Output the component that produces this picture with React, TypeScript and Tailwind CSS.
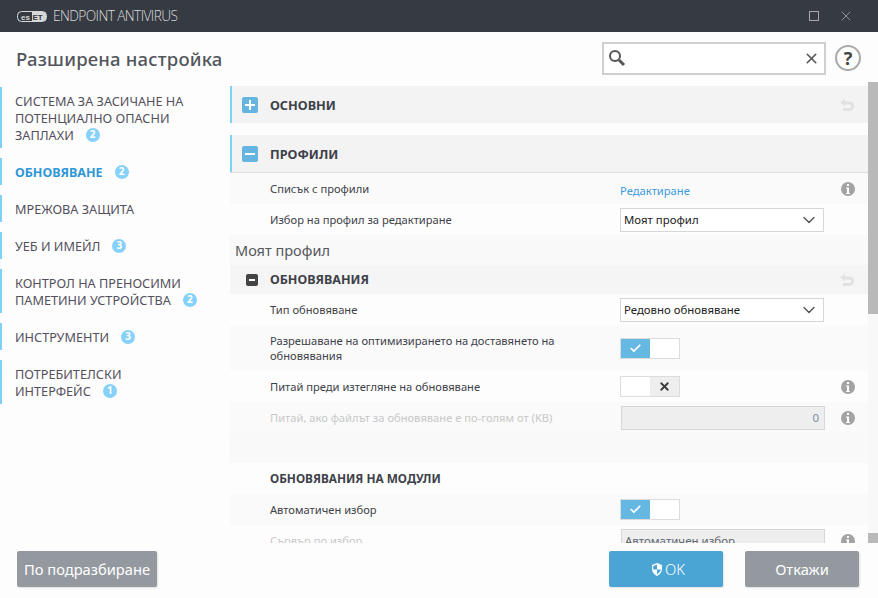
import React from 'react';
import { Check, ChevronDown, X } from 'lucide-react';

const navItems = [
  { lines: ['СИСТЕМА ЗА ЗАСИЧАНЕ НА', 'ПОТЕНЦИАЛНО ОПАСНИ', 'ЗАПЛАХИ'], badge: 2 },
  { lines: ['ОБНОВЯВАНЕ'], badge: 2, active: true },
  { lines: ['МРЕЖОВА ЗАЩИТА'] },
  { lines: ['УЕБ И ИМЕЙЛ'], badge: 3 },
  { lines: ['КОНТРОЛ НА ПРЕНОСИМИ', 'ПАМЕТИНИ УСТРОЙСТВА'], badge: 2 },
  { lines: ['ИНСТРУМЕНТИ'], badge: 3 },
  { lines: ['ПОТРЕБИТЕЛСКИ', 'ИНТЕРФЕЙС'], badge: 1 },
];

function Info() {
  return (
    <span className="w-[14px] h-[14px] rounded-full bg-[#a3a3a3] flex items-center justify-center">
      <svg width="4" height="10" viewBox="0 0 4 10">
        <rect x="1" y="0" width="2" height="2" fill="#fff" />
        <path d="M0 3.5h3V9h1v1H0V9h1V4.500H0z" fill="#fff" />
      </svg>
    </span>
  );
}

function Revert() {
  return (
    <svg width="14" height="14" viewBox="0 0 14 14" fill="none">
      <path d="M5 0.500 0.500 4.500 5 8.500V6.500h4.500a1.750 1.750 0 0 1 0 3.500H3v3h6.500a4.700 4.700 0 0 0 0-9.500H5z" fill="#e2e2e2" />
    </svg>
  );
}

function Select({ value }: { value: string }) {
  return (
    <div className="w-[204px] h-[24px] bg-white border border-[#d6d6d6] flex items-center justify-between pl-[3px] pr-[4px] text-[11.400px] text-[#222]">
      <span>{value}</span>
      <ChevronDown size={20} strokeWidth={1.700} className="text-[#555]" />
    </div>
  );
}

function Toggle({ on }: { on: boolean }) {
  return (
    <div className="w-[60px] h-[21px] border border-[#dcdcdc] bg-white flex">
      {on ? (
        <span className="w-[29px] bg-[#65b8e2] flex items-center justify-center">
          <Check size={13} strokeWidth={3.200} className="text-white" />
        </span>
      ) : (
        <>
          <span className="w-[29px]" />
          <span className="w-[29px] bg-[#eeeeee] flex items-center justify-center">
            <X size={13} strokeWidth={3.400} className="text-[#3c3c3c]" />
          </span>
        </>
      )}
    </div>
  );
}

function Row({ label, h, bg, disabled, info, children }: {
  label: React.ReactNode;
  h: string;
  bg: string;
  disabled?: boolean;
  info?: boolean;
  children?: React.ReactNode;
}) {
  return (
    <div className={`${h} ${bg} flex items-center shrink-0`}>
      <div className={`w-[390px] pl-[40px] pr-[40px] text-[11.150px] leading-[15px] ${disabled ? 'text-[#c8c8c8]' : 'text-[#3d4148]'}`}>{label}</div>
      <div className="w-[218px]">{children}</div>
      <div className="w-[14px] ml-[3px]">{info && <Info />}</div>
    </div>
  );
}

function SectionHead({ sign, label }: { sign: 'plus' | 'minus'; label: string }) {
  return (
    <div className="h-[37px] bg-[#f3f3f3] border-l-2 border-[#7fd0f7] flex items-center pr-[14px] shrink-0">
      <span className="ml-[10px] w-[16px] h-[16px] rounded-[2px] bg-[#65b5e0] flex items-center justify-center relative">
        <span className="w-[10px] h-[2px] bg-white" />
        {sign === 'plus' && <span className="absolute w-[2px] h-[10px] bg-white" />}
      </span>
      <span className="ml-[12px] pt-[2px] text-[12.700px] font-bold text-[#3d4148] flex-1">{label}</span>
      {sign === 'plus' && <Revert />}
    </div>
  );
}

function Button({ className, children }: { className: string; children: React.ReactNode }) {
  return (
    <div className={`h-[36px] rounded-[2px] flex items-center justify-center text-white text-[14.700px] shadow-[1px_1px_2px_rgba(0,0,0,0.12)] ${className}`}>
      {children}
    </div>
  );
}

export default function App() {
  return (
    <div className="w-[878px] h-[598px] bg-[#fdfdfd] flex flex-col overflow-hidden font-['Noto_Sans','Open_Sans',sans-serif]">
      <div className="h-[32px] bg-[#353a43] flex items-center shrink-0">
        <svg width="30" height="11" viewBox="0 0 30 11" className="ml-[17px]">
          <rect x="0.500" y="0.500" width="29" height="10" rx="4" fill="none" stroke="#d8d8d8" />
          <path d="M15 1h11a3 3 0 0 1 3 3v3a3 3 0 0 1-3 3H15z" fill="#d8d8d8" />
          <text x="4" y="8.500" fontSize="8" fontWeight="700" fill="#d8d8d8" fontFamily="Liberation Sans">es</text>
          <text x="15.500" y="8.500" fontSize="8" fontWeight="700" fill="#353a43" fontFamily="Liberation Sans">ET</text>
        </svg>
        <span className="ml-[6px] text-[13.700px] font-light tracking-[-0.6px] text-[#dcdcdc] font-['Open_Sans',sans-serif]">ENDPOINT ANTIVIRUS</span>
        <span className="ml-auto w-[10px] h-[10px] border border-[#a8a8a8]" />
        <X size={16} strokeWidth={1.200} className="ml-[19px] mr-[24px] text-[#a8a8a8]" />
      </div>

      <div className="h-[54px] flex items-center shrink-0">
        <h1 className="ml-[16px] text-[18.500px] tracking-[0.2px] text-[#52565c] font-medium">Разширена настройка</h1>
        <div className="ml-auto w-[224px] h-[33px] border-2 border-[#cfcfcf] bg-white flex items-center justify-between px-[4px] mt-[-2px]">
          <svg width="18" height="18" viewBox="0 0 18 18" fill="none">
            <circle cx="7" cy="7" r="5" stroke="#555" strokeWidth="2" />
            <path d="M11 11l5 5" stroke="#555" strokeWidth="3" />
          </svg>
          <X size={17} strokeWidth={2.300} className="text-[#555]" />
        </div>
        <span className="ml-[9px] mr-[17px] mt-[-2px] w-[26px] h-[26px] rounded-full border-2 border-[#aaaaaa] flex items-center justify-center text-[18px] font-bold text-[#444]">?</span>
      </div>

      <div className="h-[457px] flex shrink-0">
        <div className="w-[230px] flex flex-col gap-[10px] pt-px shrink-0">
          {navItems.map((item) => (
            <div key={item.lines[0]} className={`border-l-2 border-[#7fd0f7] pl-[13px] pt-[6px] pb-[4px] leading-[17px] ${item.active ? 'font-bold text-[12.500px] text-[#2f97d6]' : 'text-[12.700px] text-[#53505c]'}`}>
              {item.lines.map((line, i) => (
                <div key={line} className="flex items-center">
                  {line}
                  {item.badge && i === item.lines.length - 1 && (
                    <span className="ml-[12px] -mt-[2px] w-[14px] h-[14px] rounded-full bg-[#86d1fa] text-white text-[10px] font-bold flex items-center justify-center">{item.badge}</span>
                  )}
                </div>
              ))}
            </div>
          ))}
        </div>

        <div className="w-[638px] flex flex-col overflow-hidden shrink-0">
          <SectionHead sign="plus" label="ОСНОВНИ" />
          <div className="h-[12px] shrink-0" />
          <SectionHead sign="minus" label="ПРОФИЛИ" />
          <div className="h-px bg-[#dddddd] shrink-0" />
          <Row label="Списък с профили" h="h-[31px]" bg="bg-[#fafafa]" info>
            <span className="text-[#3b9bdc] text-[11.200px]">Редактиране</span>
          </Row>
          <Row label="Избор на профил за редактиране" h="h-[31px]" bg="bg-[#fdfdfd]">
            <Select value="Моят профил" />
          </Row>
          <div className="h-[30px] bg-[#f9f9f9] shrink-0 pl-[5px] text-[14.500px] leading-[30px] text-[#54575c]">Моят профил</div>
          <div className="h-[29px] bg-[#f5f5f5] flex items-center pr-[14px] shrink-0">
            <span className="ml-[16px] w-[12px] h-[12px] rounded-[2px] bg-[#444] flex items-center justify-center">
              <span className="w-[6px] h-[2px] bg-white" />
            </span>
            <span className="ml-[12px] pt-[2px] text-[12.500px] font-bold text-[#3d4148] flex-1">ОБНОВЯВАНИЯ</span>
            <Revert />
          </div>
          <Row label="Тип обновяване" h="h-[31px]" bg="bg-[#fdfdfd]">
            <Select value="Редовно обновяване" />
          </Row>
          <Row label="Разрешаване на оптимизирането на доставянето на обновявания" h="h-[46px]" bg="bg-[#fafafa]">
            <Toggle on />
          </Row>
          <Row label="Питай преди изтегляне на обновяване" h="h-[31px]" bg="bg-[#fdfdfd]" info>
            <Toggle on={false} />
          </Row>
          <Row label="Питай, ако файлът за обновяване е по-голям от (KB)" h="h-[31px]" bg="bg-[#fafafa]" disabled info>
            <div className="ml-px w-[204px] h-[24px] bg-[#eeeeee] border border-[#d6d6d6] flex items-center justify-end pr-[5px] text-[11.500px] text-[#7f8da0]">0</div>
          </Row>
          <div className="h-[30px] bg-[#f9f9f9] shrink-0" />
          <div className="h-[31px] bg-[#fdfdfd] shrink-0 pl-[40px] text-[11.800px] leading-[31px] font-bold text-[#3d4148]">ОБНОВЯВАНИЯ НА МОДУЛИ</div>
          <Row label="Автоматичен избор" h="h-[31px]" bg="bg-[#fafafa]">
            <Toggle on />
          </Row>
          <Row label="Сървър по избор" h="h-[31px]" bg="bg-[#fdfdfd]" disabled info>
            <div className="ml-px w-[204px] h-[24px] bg-[#eeeeee] border border-[#d6d6d6] flex items-center pl-[3px] text-[11.500px] text-[#5f6670]">Автоматичен избор</div>
          </Row>
        </div>

        <div className="w-[10px] -mt-[4px] h-[461px] bg-[#f8f8f8] flex flex-col justify-between shrink-0">
          <div className="h-[232px] bg-[#b9b9b9]" />
          <div className="h-[10px] bg-[#b9b9b9]" />
        </div>
      </div>

      <div className="flex-1 flex items-start pt-[8px]">
        <Button className="ml-[17px] w-[140px] bg-[#93999f]">По подразбиране</Button>
        <Button className="ml-auto w-[114px] pl-[5px] bg-[#4aa5d4] gap-[3px] font-light">
          <svg width="10" height="13" viewBox="0 0 10 13">
            <path d="M5 0 10 2v4c0 3-2 5.500-5 7-3-1.500-5-4-5-7V2z" fill="#fff" />
            <path d="M5 1.500V6.500H1.200V3z M5 6.500h3.800C8.500 8.500 7 10 5 11.300z" fill="#4aa5d4" />
          </svg>
          OK
        </Button>
        <Button className="ml-[22px] mr-[19px] w-[114px] bg-[#93999f]">Откажи</Button>
      </div>
    </div>
  );
}
